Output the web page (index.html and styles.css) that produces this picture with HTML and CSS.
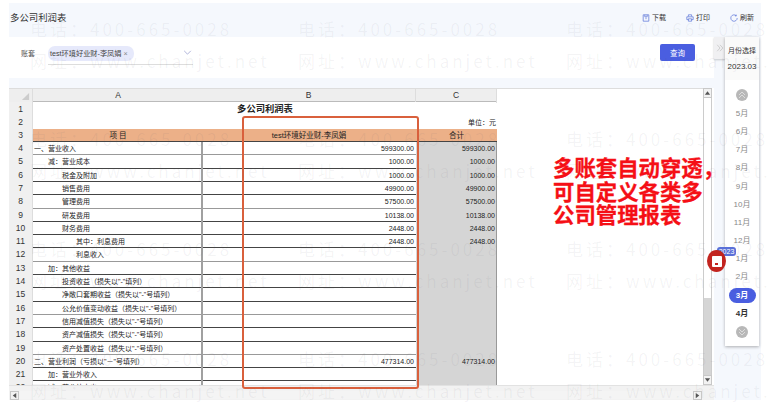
FILE: index.html
```html
<!DOCTYPE html>
<html lang="zh">
<head>
<meta charset="utf-8">
<title>多公司利润表</title>
<link rel="stylesheet" href="styles.css">
</head>
<body>
<div class="page">
  <header class="toolbar">
    <h1 class="title">多公司利润表</h1>
    <nav class="actions">
      <span class="action"><svg class="ico" viewBox="0 0 10 10"><path d="M1.500 1h7v8h-7z M3.500 1v2.500h3V1 M5 4.500v2"/></svg>下载</span>
      <span class="action"><svg class="ico" viewBox="0 0 10 10"><path d="M3 3V1h4v2 M1 7V3.500h8V7H7 M3 7H1 M3 6h4v3H3z"/></svg>打印</span>
      <span class="action"><svg class="ico" viewBox="0 0 10 10"><path d="M7.800 2.200A4 4 0 1 0 9 5 M7.800 .8v1.600H6.200"/></svg>刷新</span>
    </nav>
  </header>
  <div class="body">
    <main class="left">
      <section class="filter">
        <span class="f-label">账套</span>
        <div class="select">
          <span class="tag">test环境好业财-李凤娟 <i class="x">×</i></span>
          <svg class="chev" viewBox="0 0 10 6"><path d="M1 1l4 4 4-4"/></svg>
        </div>
        <button class="query">查询</button>
      </section>
      <section class="sheet">
        <div class="sheet-top">
          <div class="viewport">
            <div class="row hdr"><div class="n corner"><svg viewBox="0 0 10 10"><path d="M9 1v8H1z"/></svg></div><div class="c ca">A</div><div class="c cb">B</div><div class="c cc">C</div></div>
            <div class="row plain r1"><div class="n">1</div><div class="c merged">多公司利润表</div></div>
            <div class="row plain"><div class="n">2</div><div class="c ca"></div><div class="c cb"></div><div class="c cc num">单位：元</div></div>
            <div class="row head"><div class="n">3</div><div class="c ca ctr">项 目</div><div class="c cb ctr">test环境好业财-李凤娟</div><div class="c cc ctr">合计</div></div>
            <div class="row soft"><div class="n">4</div><div class="c ca">一、营业收入</div><div class="c cb num">599300.00</div><div class="c cc num">599300.00</div></div>
            <div class="row"><div class="n">5</div><div class="c ca i1">减：营业成本</div><div class="c cb num">1000.00</div><div class="c cc num">1000.00</div></div>
            <div class="row"><div class="n">6</div><div class="c ca i2">税金及附加</div><div class="c cb num">1000.00</div><div class="c cc num">1000.00</div></div>
            <div class="row"><div class="n">7</div><div class="c ca i2">销售费用</div><div class="c cb num">49900.00</div><div class="c cc num">49900.00</div></div>
            <div class="row soft"><div class="n">8</div><div class="c ca i2">管理费用</div><div class="c cb num">57500.00</div><div class="c cc num">57500.00</div></div>
            <div class="row"><div class="n">9</div><div class="c ca i2">研发费用</div><div class="c cb num">10138.00</div><div class="c cc num">10138.00</div></div>
            <div class="row"><div class="n">10</div><div class="c ca i2">财务费用</div><div class="c cb num">2448.00</div><div class="c cc num">2448.00</div></div>
            <div class="row"><div class="n">11</div><div class="c ca i3">其中：利息费用</div><div class="c cb num">2448.00</div><div class="c cc num">2448.00</div></div>
            <div class="row soft"><div class="n">12</div><div class="c ca i3">利息收入</div><div class="c cb"></div><div class="c cc"></div></div>
            <div class="row"><div class="n">13</div><div class="c ca i1">加：其他收益</div><div class="c cb"></div><div class="c cc"></div></div>
            <div class="row"><div class="n">14</div><div class="c ca i2">投资收益（损失以"-"填列）</div><div class="c cb"></div><div class="c cc"></div></div>
            <div class="row"><div class="n">15</div><div class="c ca i2">净敞口套期收益（损失以"-"号填列）</div><div class="c cb"></div><div class="c cc"></div></div>
            <div class="row soft"><div class="n">16</div><div class="c ca i2">公允价值变动收益（损失以"-"号填列）</div><div class="c cb"></div><div class="c cc"></div></div>
            <div class="row"><div class="n">17</div><div class="c ca i2">信用减值损失（损失以"-"号填列）</div><div class="c cb"></div><div class="c cc"></div></div>
            <div class="row"><div class="n">18</div><div class="c ca i2">资产减值损失（损失以"-"号填列）</div><div class="c cb"></div><div class="c cc"></div></div>
            <div class="row soft"><div class="n">19</div><div class="c ca i2">资产处置收益（损失以"-"号填列）</div><div class="c cb"></div><div class="c cc"></div></div>
            <div class="row"><div class="n">20</div><div class="c ca">二、营业利润（亏损以"－"号填列）</div><div class="c cb num">477314.00</div><div class="c cc num">477314.00</div></div>
            <div class="row"><div class="n">21</div><div class="c ca i1">加：营业外收入</div><div class="c cb"></div><div class="c cc"></div></div>
            <div class="row"><div class="n">22</div><div class="c ca i1">减：营业外支出</div><div class="c cb"></div><div class="c cc"></div></div>
          </div>
          <div class="vbar">
            <span class="sbtn"><svg viewBox="0 0 8 8"><path d="M4 2l3 4H1z"/></svg></span>
            <span class="v-thumb"></span>
            <span class="v-track"></span>
            <span class="sbtn"><svg viewBox="0 0 8 8"><path d="M4 6L1 2h6z"/></svg></span>
          </div>
        </div>
        <div class="hbar">
          <span class="sbtn"><svg viewBox="0 0 8 8"><path d="M2 4l4-3v6z"/></svg></span>
          <span class="h-track"></span>
          <span class="sbtn"><svg viewBox="0 0 8 8"><path d="M6 4L2 7V1z"/></svg></span>
        </div>
        <div class="redbox"></div>
      </section>
    </main>
    <div class="toggle"><svg viewBox="0 0 10 10"><path d="M1.500 1l3.500 4-3.500 4 M5 1l3.500 4L5 9"/></svg></div>
    <aside class="months">
      <div class="m-head"><div>月份选择</div><div class="m-val">2023.03</div></div>
      <ul class="m-list">
        <li class="circle up"><svg viewBox="0 0 12 12"><path d="M3 6l3-3 3 3 M3 9l3-3 3 3"/></svg></li>
        <li>5月</li><li>6月</li><li>7月</li><li>8月</li><li>9月</li><li>10月</li><li>11月</li><li>12月</li><li>1月</li><li>2月</li>
        <li class="cur"><b>3月</b></li>
        <li class="dark">4月</li>
        <li class="circle"><svg viewBox="0 0 12 12"><path d="M3 3l3 3 3-3 M3 6l3 3 3-3"/></svg></li>
      </ul>
    </aside>
  </div>
</div>
<div class="watermark" aria-hidden="true">
  <div>电话：400-665-0028<br>网址：www.chanjet.net</div><div>电话：400-665-0028<br>网址：www.chanjet.net</div><div>电话：400-665-0028<br>网址：www.chanjet.net</div>
  <div>电话：400-665-0028<br>网址：www.chanjet.net</div><div>电话：400-665-0028<br>网址：www.chanjet.net</div><div>电话：400-665-0028<br>网址：www.chanjet.net</div>
  <div>电话：400-665-0028<br>网址：www.chanjet.net</div><div>电话：400-665-0028<br>网址：www.chanjet.net</div><div>电话：400-665-0028<br>网址：www.chanjet.net</div>
  <div>电话：400-665-0028<br>网址：www.chanjet.net</div><div>电话：400-665-0028<br>网址：www.chanjet.net</div><div>电话：400-665-0028<br>网址：www.chanjet.net</div>
</div>
<div class="callout">多账套自动穿透，<br>可自定义各类多<br>公司管理报表</div>
<span class="year">2023</span>
<span class="blob"><i></i></span>
</body>
</html>
```
FILE: styles.css
```css
*{box-sizing:border-box}
html,body{margin:0;padding:0;height:406px;overflow:hidden;background:#fff}
body{font-family:"Liberation Sans","Noto Sans CJK SC",sans-serif;color:#222;position:relative}
.page{margin:3px 0 0 9px;width:752px;height:397px;background:#f5f8fd;display:flex;flex-direction:column}
.toolbar{height:34px;flex:none;display:flex;justify-content:space-between;align-items:flex-start}
.title{margin:8px 0 0 1px;font-size:9.400px;line-height:14px;font-weight:400;color:#333}
.actions{display:flex;margin:10px 7px 0 0;gap:20px}
.action{display:flex;align-items:center;gap:2px;font-size:7px;line-height:10px;color:#333}
.ico{width:8px;height:8px;fill:none;stroke:#5b74d8;stroke-width:.9}
.body{display:flex;flex:1;min-height:0}
.left{width:705px;flex:none;display:flex;flex-direction:column}
.filter{height:41px;flex:none;background:#fff;display:flex;align-items:flex-start;padding:0 19px 0 12px}
.f-label{font-size:7px;line-height:10px;margin-top:12px;color:#555;width:27px}
.select{width:145px;height:28px;border-bottom:1px solid #ddd;position:relative;padding-top:9px}
.tag{display:block;height:15px;line-height:15px;padding:0 2px;width:86px;border-radius:7px;background:#e6e9fb;font-size:7.200px;color:#444;white-space:nowrap}
.x{font-style:normal;color:#888}
.chev{position:absolute;right:1px;top:13px;width:9px;height:5px;fill:none;stroke:#8a90c8;stroke-width:.8}
.query{margin:7px 0 0 auto;width:35px;height:17px;border:0;padding:0;border-radius:2px;background:#4a5ee0;color:#fff;font:7.500px "Liberation Sans","Noto Sans CJK SC",sans-serif}
.sheet{margin-top:10px;flex:1;background:#fff;display:flex;flex-direction:column;min-height:0;position:relative}
.sheet-top{flex:1;display:flex;min-height:0}
.viewport{width:694px;overflow:hidden;border-top:1px solid #ddd}
.row{display:grid;grid-template-columns:24px 169px 214px 81px;height:13.300px;font-size:7px;line-height:13.500px;border-bottom:1px solid #444;width:488px;color:#222}
.row.soft{border-bottom:1.500px solid #999}
.row.plain{border-bottom:0}
.r1{height:13.500px;line-height:14px}
.hdr{height:13px;border-bottom:1px solid #bbb;background:#eee;font-size:8.500px;line-height:13px;color:#333}
.hdr .c{text-align:center;border-right:1px solid #ddd}
.n{background:#f0f0f0;text-align:center;font-size:8.500px;color:#333;border-right:1px solid #ddd;margin-bottom:-1px}
.corner{display:flex;align-items:center;justify-content:flex-end;padding-right:2px;background:#eee}
.corner svg{width:9px;height:9px;fill:#ccc}
.c{white-space:nowrap;overflow:visible;min-width:0}
.ca{padding-left:1px;border-right:2px solid #a0a0a0;margin:0 -1px -1px 0}
.plain .ca,.head .ca,.hdr .ca{border-right:0;margin-right:0}
.cc{background:#d5d5d5;border-right:1px solid #999;margin-bottom:-1px}
.plain .cc{background:none;border-right:0}
.hdr .cc{background:none}
.merged{grid-column:2/5;text-align:center;font-size:9.300px;font-weight:700;color:#222}
.num{text-align:right;padding-right:2px}
.cc.num{padding-right:1px}
.ctr{text-align:center;font-size:7.500px}
.i1{padding-left:15px}
.i2{padding-left:29px}
.i3{padding-left:43px}
.head{background:#ecb088}
.head .cc{background:none;border-right:0}
.redbox{position:absolute;left:233px;top:28px;width:177px;height:273px;border:2px solid #d9603c;border-radius:3px}
.vbar{width:9px;display:flex;flex-direction:column;background:#fff;border:1px solid #ccc;border-width:0 1px}
.sbtn{flex:none;display:block;width:9px;height:10px;background:#f2f2f2;border:1px solid #c8c8c8}
.sbtn svg{display:block;width:100%;height:100%;fill:#555}
.vbar .sbtn{margin-left:-1px}
.v-thumb{height:200px;flex:none;background:#fff}
.v-track{flex:1;background:#d5d5d5}
.hbar{height:15px;flex:none;display:flex;padding:5px 12px 1px 1px;background:#f2f2f2;border-top:1px solid #e2e2e2}
.hbar .sbtn{height:9px}
.h-track{flex:1;background:#f4f4f4}
.toggle{width:11px;height:22px;flex:none;background:#f0f0f2;box-shadow:0 1px 2px rgba(0,0,0,.2);display:flex;align-items:center;justify-content:center}
.toggle svg{width:8px;height:8px;fill:none;stroke:#bbb;stroke-width:.8}
.months{width:34px;height:309px;flex:none;background:#fff;box-shadow:0 1px 3px rgba(0,0,0,.3);font-size:7px;color:#333;text-align:center}
.m-head{height:43px;padding-top:9px;line-height:10px;background:#fafafa;font-size:7px}
.m-val{margin-top:6px;font-size:8px}
.m-list{list-style:none;margin:0;padding:5px 0 0;color:#888;font-size:8px}
.m-list li{height:18.170px;line-height:18.170px;display:flex;justify-content:center;align-items:center}
.m-list li.up{height:20px}
.circle svg{width:12px;height:12px;border-radius:50%;background:#b8b8b8;fill:none;stroke:#e4e4e4;stroke-width:.8}
.cur b{display:block;width:27px;height:15px;line-height:15px;border-radius:8px;background:#4a5ee0;color:#fff;font-weight:700}
.dark{color:#333;font-weight:700}
.watermark{position:absolute;left:30px;top:13px;width:738px;height:393px;overflow:hidden;display:grid;grid-template-columns:repeat(3,268px);grid-auto-rows:110px;pointer-events:none;font:17px/32px "Noto Sans CJK SC",sans-serif;letter-spacing:3px;color:rgba(90,90,110,.065);white-space:nowrap}
.callout{position:absolute;left:553px;top:155px;font:700 21.400px/23.500px "Noto Sans CJK SC",sans-serif;-webkit-text-stroke:.3px #f50f16;color:#f50f16;white-space:nowrap}
.year{position:absolute;left:717px;top:247px;width:19px;height:9px;border-radius:3px;background:#5a70d8;color:#fff;font-size:7px;line-height:9px;text-align:center}
.blob{position:absolute;left:707px;top:250px;width:19px;height:22px;border-radius:50%;background:#c2241f;display:flex;align-items:center;justify-content:center}
.blob i{display:block;width:10px;height:11px;border-radius:1px;background:#fff;position:relative}
.blob i::after{content:"";position:absolute;left:3px;top:7px;width:3px;height:2px;background:#c2241f}
```
